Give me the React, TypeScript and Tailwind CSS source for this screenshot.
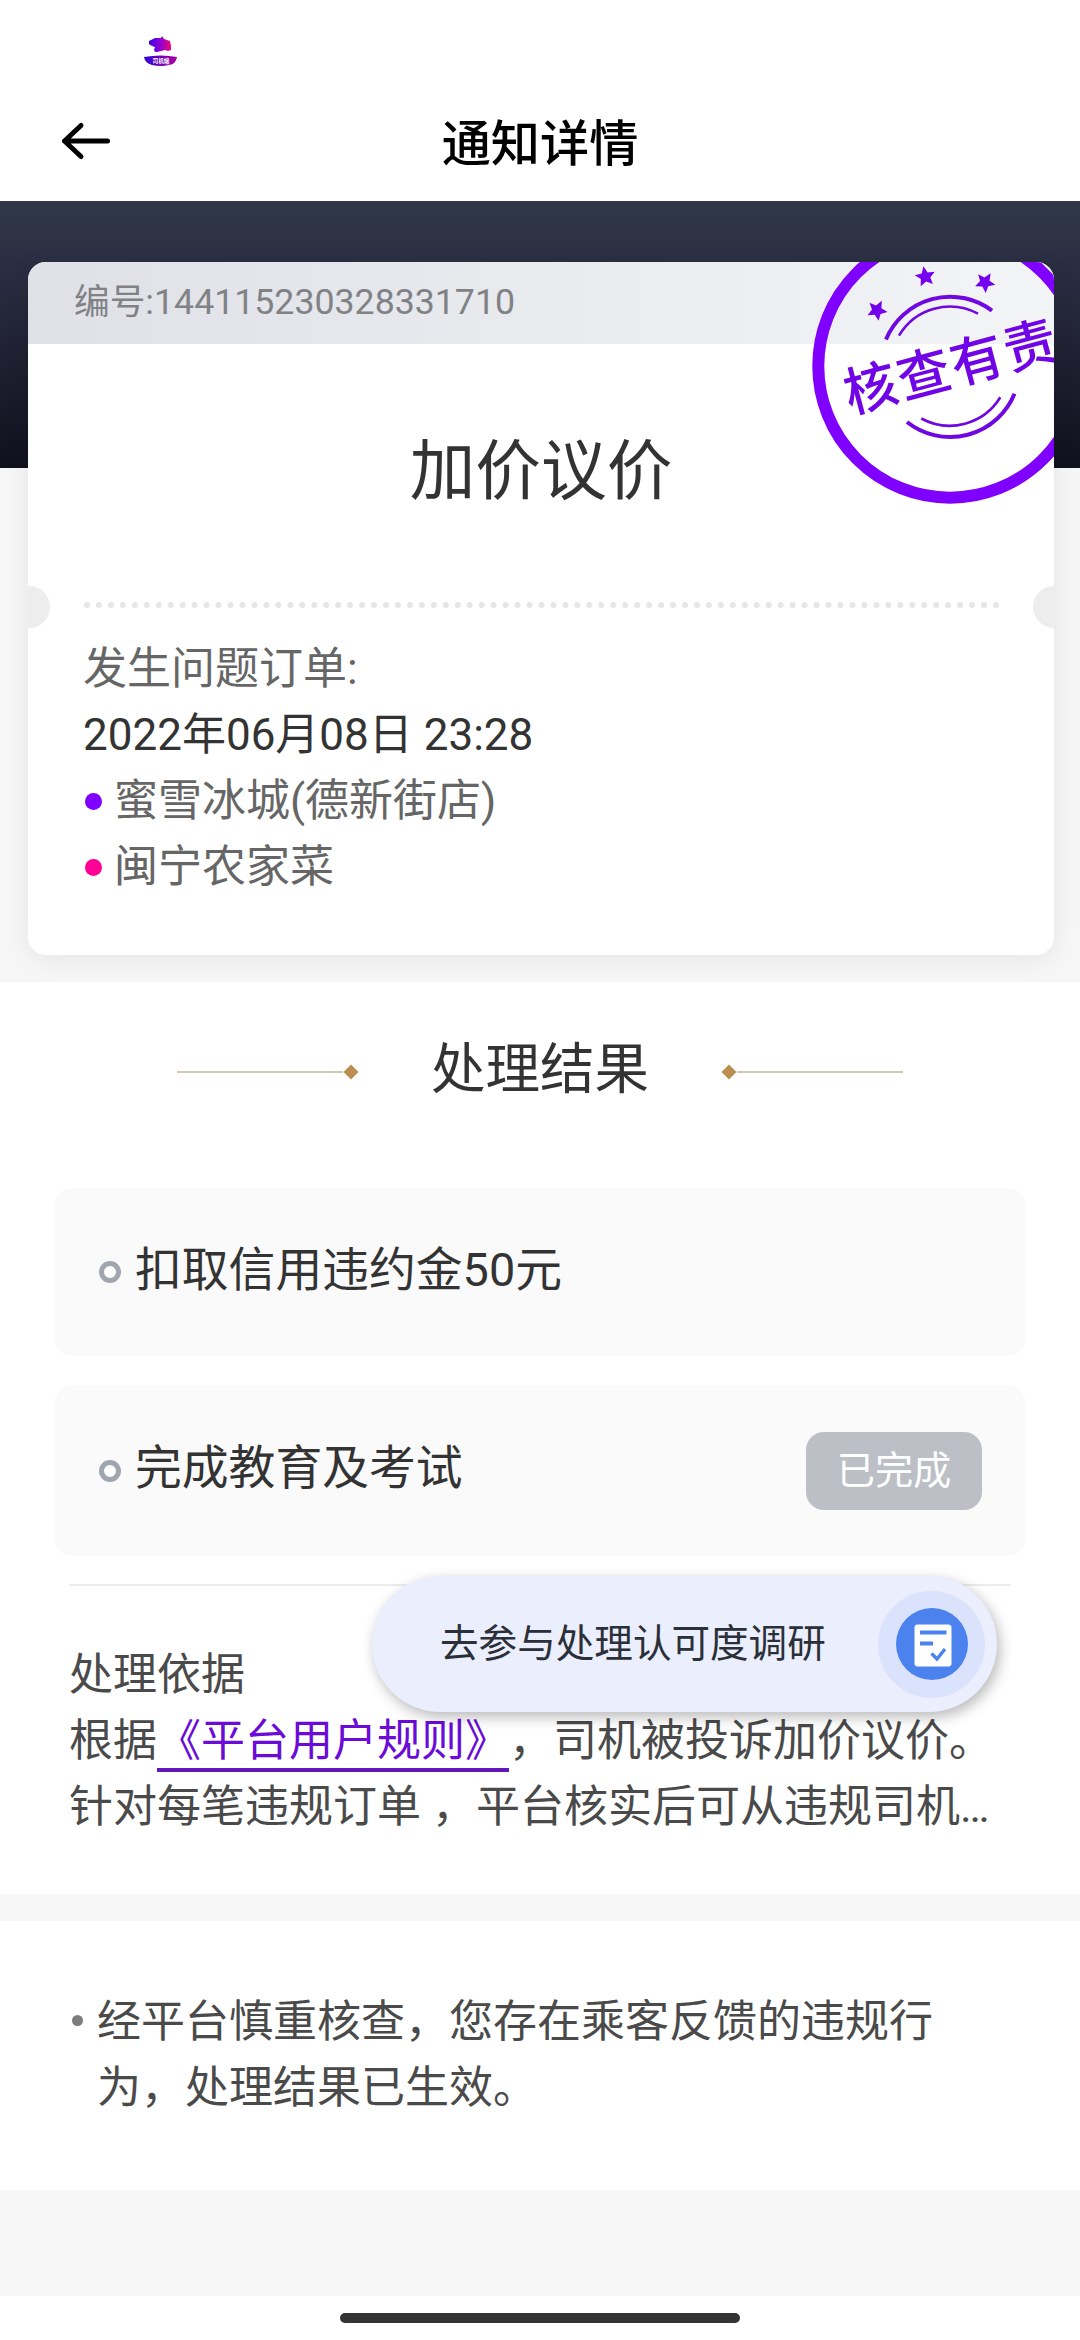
const orderInfo = [
  { name: "蜜雪冰城(德新街店)", dot: "bg-[#7f00ff]" },
  { name: "闽宁农家菜", dot: "bg-[#ff0096]" },
];

const results = [
  { title: "扣取信用违约金50元", height: "h-[168px]", status: "" },
  { title: "完成教育及考试", height: "h-[171px]", status: "已完成" },
];

const stars = [
  { x: 877, y: 310.3, rotate: 27 },
  { x: 925.3, y: 276.7, rotate: -10 },
  { x: 985, y: 282.3, rotate: 32 },
];

function StatusLogo() {
  return (
    <svg className="w-[36px] h-[36px]" viewBox="0 0 36 36">
      <defs>
        <linearGradient id="logo" x1="0" x2="1">
          <stop offset="0" stopColor="#3a00e0" />
          <stop offset="0.5" stopColor="#8a00d8" />
          <stop offset="1" stopColor="#ee0a78" />
        </linearGradient>
        <linearGradient id="hull" x1="0" x2="1">
          <stop offset="0" stopColor="#2c00dc" />
          <stop offset="1" stopColor="#b0009c" />
        </linearGradient>
      </defs>
      <path d="M6 7 L12 4 L18 4 L19 2 L21 5 L27 7 L28 12 L28 16 L25 17 L22 16 L14 18 L12 18 L11 16 L12 13 L9 12 L6 10 Z" fill="url(#logo)" />
      <path d="M1 23 Q18 20 34 23 Q33 30 26 31 Q18 33 9 31 Q2 29 1 23 Z" fill="url(#hull)" />
      <text x="18" y="28.8" textAnchor="middle" fontSize="5.6" fontWeight="700" fill="#fff">司机端</text>
    </svg>
  );
}

function Stamp() {
  return (
    <svg className="absolute top-0 right-0 w-[254px] h-[244px]" viewBox="800 262 254 244" fill="none">
      <circle cx="950" cy="366" r="131.7" stroke="#7f00ff" strokeWidth="12" />
      {stars.map((s, i) => (
        <path
          key={i}
          transform={`translate(${s.x} ${s.y}) rotate(${s.rotate})`}
          d="M0 -10.6 L3 -3.8 L10.1 -3.3 L4.8 1.6 L6.2 8.6 L0 5 L-6.2 8.6 L-4.8 1.6 L-10.1 -3.3 L-3 -3.8 Z"
          fill="#7400ee"
        />
      ))}
      <g stroke="#7006e2">
        <path d="M886 339.5 A69.5 69.5 0 0 1 992 310.7" strokeWidth="4" />
        <path d="M899 335.7 A59.3 59.3 0 0 1 978 313.7" strokeWidth="2.6" />
        <path d="M907 422 A69.5 69.5 0 0 0 1014.5 393.7" strokeWidth="4" />
        <path d="M921.3 418.5 A59.3 59.3 0 0 0 1000.3 397.3" strokeWidth="2.6" />
      </g>
      <text
        transform="translate(950 367) rotate(-15)"
        x="1.5"
        y="19"
        textAnchor="middle"
        fontSize="53"
        fontWeight="500"
        letterSpacing="2"
        fill="#7004e6"
      >
        核查有责
      </text>
    </svg>
  );
}

function Diamond() {
  return (
    <svg className="w-[16px] h-[16px]" viewBox="0 0 16 16">
      <path d="M8 0.5 L15.5 8 L8 15.5 L0.5 8 Z" fill="#ba8e50" />
    </svg>
  );
}

export default function App() {
  return (
    <div className="relative w-[1080px] h-[2340px] overflow-hidden bg-[#f6f6f6] flex flex-col font-[Roboto,'Noto_Sans_CJK_SC',sans-serif] text-[#333]">
      {/* Status bar and title */}
      <header className="h-[201px] bg-white flex flex-col shrink-0">
        <div className="h-[81px] pl-[143px] pt-[34px]">
          <StatusLogo />
        </div>
        <div className="h-[120px] grid grid-cols-3 items-center px-[60px]">
          <svg className="w-[52px] h-[40px]" viewBox="0 0 52 40" fill="none" stroke="#000" strokeWidth="5" strokeLinecap="round" strokeLinejoin="round">
            <path d="M4.5 20 H47.5 M21 4.5 L4.5 20 L21 35.5" />
          </svg>
          <h1 className="pt-[5px] text-[49.2px] leading-[60px] font-medium text-black text-center whitespace-nowrap">通知详情</h1>
        </div>
      </header>

      {/* Ticket */}
      <section className="h-[781px] shrink-0 pl-[28px] pt-[61px] pr-[26px] bg-[linear-gradient(#303848,#2a2d42_70px,#10111d_267px)] bg-[length:100%_267px] bg-no-repeat">
        <div className="relative h-[693px] bg-white rounded-[18px] shadow-[0_4px_24px_rgba(0,0,0,0.07)]">
          <div className="relative h-full rounded-[18px] overflow-hidden">
            <div className="h-[82px] pl-[46px] flex items-center bg-linear-to-r from-[#dfe1e7] to-[#f2f4f6] text-[35.7px] leading-none text-[#808285]">
              编号:144115230328331710
            </div>
            <h2 className="h-[250px] pt-[6px] flex items-center justify-center text-[65.7px] leading-none">加价议价</h2>
            <div className="h-[42px] -mt-[8px] flex items-center justify-between">
              <span className="w-[42px] h-[42px] -ml-[20px] rounded-full bg-[#ededed]" />
              <svg className="w-[916px] h-[6px] mb-[5px]" viewBox="0 0 916 6">
                <line x1="3" y1="3" x2="914" y2="3" stroke="#e6e6e6" strokeWidth="6" strokeLinecap="round" strokeDasharray="0 11.96" />
              </svg>
              <span className="w-[42px] h-[42px] -mr-[21px] rounded-full bg-[#ededed]" />
            </div>
            <div className="pl-[55px] pt-[8px] text-[44px] leading-[66px] text-[#666]">
              <p>发生问题订单:</p>
              <p className="text-[#333]">2022年06月08日 23:28</p>
              {orderInfo.map((item) => (
                <p key={item.name} className="flex items-center gap-[12px]">
                  <span className={`ml-[2px] w-[17px] h-[17px] rounded-full ${item.dot}`} />
                  {item.name}
                </p>
              ))}
            </div>
            <Stamp />
          </div>
        </div>
      </section>

      {/* Results */}
      <section className="h-[912px] shrink-0 bg-white px-[54px]">
        <div className="h-[206px] pb-[32px] flex items-center justify-center gap-[72px]">
          <div className="mt-[6px] flex items-center">
            <span className="w-[166px] h-[2px] bg-[#d0c8b2]" />
            <Diamond />
          </div>
          <h2 className="text-[54.5px] leading-none">处理结果</h2>
          <div className="mt-[6px] flex items-center">
            <Diamond />
            <span className="w-[166px] h-[2px] bg-[#d0c8b2]" />
          </div>
        </div>

        <div className="flex flex-col gap-[29px]">
          {results.map((item) => (
            <div key={item.title} className={`${item.height} rounded-[20px] bg-[#fafafa] flex items-center pl-[45px] pr-[44px]`}>
              <span className="w-[22px] h-[22px] rounded-full border-[5px] border-[#a1a5b0] bg-white" />
              <span className="ml-[14px] pb-[4px] flex-1 text-[46.8px] leading-none">{item.title}</span>
              {item.status && (
                <span className="w-[176px] h-[78px] pt-[2px] rounded-[18px] bg-[#bcbfc5] text-white text-[38.2px] flex items-center justify-center">
                  {item.status}
                </span>
              )}
            </div>
          ))}
        </div>

        <div className="mt-[28px] mx-[15px] border-t-2 border-[#ececec]" />

        <div className="pl-[15px] pt-[56px] text-[44px] leading-[66px] text-[#4a4a4a] whitespace-nowrap">
          <p>处理依据</p>
          <p>
            根据
            <span className="inline-block h-[64px] border-b-4 border-[#6416be] text-[#6a0bd8]">《平台用户规则》</span>
            ，司机被投诉加价议价。
          </p>
          <p>针对每笔违规订单 ，平台核实后可从违规司机…</p>
        </div>
      </section>

      {/* Notice */}
      <section className="mt-[27px] h-[269px] shrink-0 bg-white pl-[72px] pt-[68px] pr-[100px] flex gap-[14px] text-[44px] leading-[66px] text-[#4a4a4a]">
        <span className="mt-[26px] w-[11px] h-[11px] shrink-0 rounded-full bg-[#7c7c7c]" />
        <p>经平台慎重核查，您存在乘客反馈的违规行为，处理结果已生效。</p>
      </section>

      {/* Home indicator */}
      <footer className="mt-auto h-[44px] shrink-0 bg-white flex justify-center items-center">
        <span className="w-[400px] h-[10px] rounded-full bg-[#333]" />
      </footer>

      {/* Floating survey entry */}
      <button className="absolute left-[372px] top-[1576px] w-[625px] h-[136px] pl-[68px] pr-[12px] rounded-full bg-[#eaeefd] shadow-[3px_5px_14px_rgba(0,0,0,0.28)] flex items-center justify-between">
        <span className="text-[38.6px] leading-none text-[#2b2f38] whitespace-nowrap">去参与处理认可度调研</span>
        <span className="w-[107px] h-[107px] rounded-full bg-[#dbe2fb] flex items-center justify-center">
          <svg className="w-[72px] h-[72px]" viewBox="0 0 72 72" fill="none">
            <circle cx="36" cy="36" r="36" fill="#4c82ee" />
            <rect x="18.5" y="16.5" width="37" height="42" rx="3" fill="#fff" />
            <path d="M24 24.5 H50.5 M24 35.5 H37" stroke="#4c82ee" strokeWidth="4" />
            <path d="M35.5 45.5 L41 51 L49 41" stroke="#4c82ee" strokeWidth="3.4" />
          </svg>
        </span>
      </button>
    </div>
  );
}
